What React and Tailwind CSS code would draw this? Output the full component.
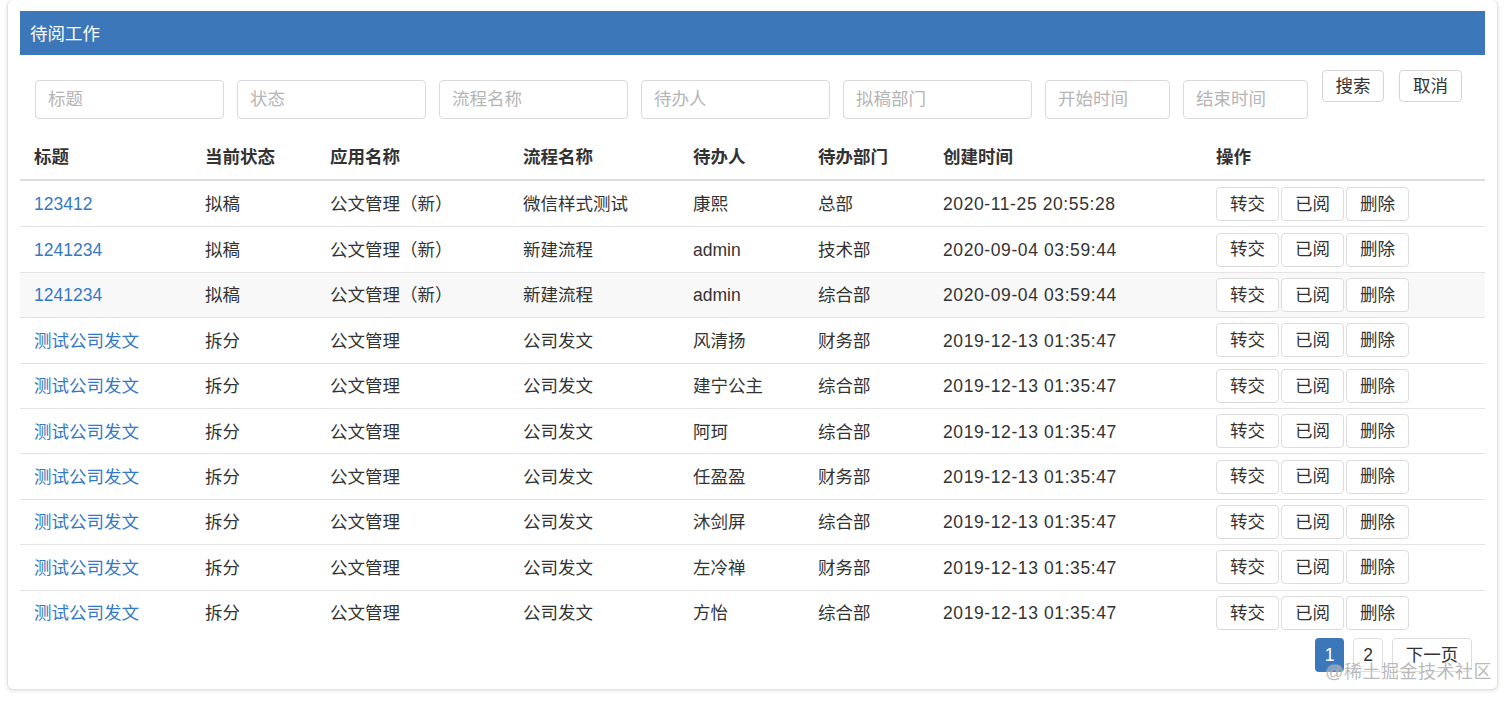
import React from 'react';

const rows = [
  { title: '123412', status: '拟稿', app: '公文管理（新）', flow: '微信样式测试', user: '康熙', dept: '总部', time: '2020-11-25 20:55:28' },
  { title: '1241234', status: '拟稿', app: '公文管理（新）', flow: '新建流程', user: 'admin', dept: '技术部', time: '2020-09-04 03:59:44' },
  { title: '1241234', status: '拟稿', app: '公文管理（新）', flow: '新建流程', user: 'admin', dept: '综合部', time: '2020-09-04 03:59:44', hover: true },
  { title: '测试公司发文', status: '拆分', app: '公文管理', flow: '公司发文', user: '风清扬', dept: '财务部', time: '2019-12-13 01:35:47' },
  { title: '测试公司发文', status: '拆分', app: '公文管理', flow: '公司发文', user: '建宁公主', dept: '综合部', time: '2019-12-13 01:35:47' },
  { title: '测试公司发文', status: '拆分', app: '公文管理', flow: '公司发文', user: '阿珂', dept: '综合部', time: '2019-12-13 01:35:47' },
  { title: '测试公司发文', status: '拆分', app: '公文管理', flow: '公司发文', user: '任盈盈', dept: '财务部', time: '2019-12-13 01:35:47' },
  { title: '测试公司发文', status: '拆分', app: '公文管理', flow: '公司发文', user: '沐剑屏', dept: '综合部', time: '2019-12-13 01:35:47' },
  { title: '测试公司发文', status: '拆分', app: '公文管理', flow: '公司发文', user: '左冷禅', dept: '财务部', time: '2019-12-13 01:35:47' },
  { title: '测试公司发文', status: '拆分', app: '公文管理', flow: '公司发文', user: '方怡', dept: '综合部', time: '2019-12-13 01:35:47' },
];

const filters = [
  { label: '标题', w: 'w-[189px]' },
  { label: '状态', w: 'w-[189px]' },
  { label: '流程名称', w: 'w-[189px]' },
  { label: '待办人', w: 'w-[189px]' },
  { label: '拟稿部门', w: 'w-[189px]' },
  { label: '开始时间', w: 'w-[125px]' },
  { label: '结束时间', w: 'w-[125px]' },
];

const cols = 'grid grid-cols-[171px_125px_193px_170px_125px_125px_273px_1fr]';

const ActionButton = ({ children }) => (
  <button className="h-[34px] w-[63px] rounded border border-[#dcdcdc] bg-white text-[17.5px] text-[#333]">
    {children}
  </button>
);

export default function App() {
  return (
    <div className="min-h-screen bg-white font-['Liberation_Sans','Noto_Sans_CJK_SC',sans-serif] text-[17.5px] text-[#333]">
      <div className="relative ml-[7px] mr-[14px] rounded-md border border-t-0 border-[#e2e2e2] px-[12px] pt-[11px] pb-[17px] shadow-[0_1px_4px_rgba(0,0,0,0.12)]">
        <div className="flex h-[44px] items-center bg-[#3c77b9] pl-[10px] pt-[2px] text-[17.5px] text-white">待阅工作</div>

        <div className="flex items-start pl-[15px] pt-[15px]">
          {filters.map((f, i) => (
            <input
              key={f.label}
              placeholder={f.label}
              className={`${f.w} mt-[10px] h-[39px] rounded border border-[#d9d9d9] px-[12px] text-[17.5px] outline-none placeholder:text-[#b5b5b5] ${i < filters.length - 1 ? 'mr-[13px]' : 'mr-[14px]'}`}
            />
          ))}
          <button className="h-[32px] w-[62px] rounded border border-[#d4d4d4] bg-white text-[17.5px] text-[#333]">搜索</button>
          <button className="ml-[15px] h-[32px] w-[63px] rounded border border-[#d4d4d4] bg-white text-[17.5px] text-[#333]">取消</button>
        </div>

        <div className="mt-[17px]">
          <div className={`${cols} h-[45px] items-center border-b-2 border-[#dddddd] font-bold`}>
            {['标题', '当前状态', '应用名称', '流程名称', '待办人', '待办部门', '创建时间', '操作'].map((h) => (
              <div key={h} className="pl-[14px]">{h}</div>
            ))}
          </div>
          {rows.map((r, i) => (
            <div
              key={i}
              className={`${cols} h-[45.4px] items-center ${i > 0 ? 'border-t border-[#e3e3e3]' : ''} ${r.hover ? 'bg-[#f8f8f8]' : ''}`}
            >
              <div className="pl-[14px] pt-[1px] text-[#3479c5]">{r.title}</div>
              <div className="pl-[14px] pt-[1px]">{r.status}</div>
              <div className="pl-[14px] pt-[1px]">{r.app}</div>
              <div className="pl-[14px] pt-[1px]">{r.flow}</div>
              <div className="pl-[14px] pt-[1px]">{r.user}</div>
              <div className="pl-[14px] pt-[1px]">{r.dept}</div>
              <div className="pl-[14px] pt-[1px] tracking-[0.6px]">{r.time}</div>
              <div className="flex gap-[2px] pl-[14px]">
                <ActionButton>转交</ActionButton>
                <ActionButton>已阅</ActionButton>
                <ActionButton>删除</ActionButton>
              </div>
            </div>
          ))}
        </div>

        <div className="mt-[3px] flex justify-end gap-[9px] pr-[13px]">
          <button className="h-[34px] w-[29px] rounded bg-[#3c77b9] text-[17.5px] text-white">1</button>
          <button className="h-[34px] w-[30px] rounded border border-[#dcdcdc] bg-white text-[17.5px] text-[#333]">2</button>
          <button className="h-[34px] w-[80px] rounded border border-[#dcdcdc] bg-white text-[17.5px] text-[#333]">下一页</button>
        </div>

        <div className="pointer-events-none absolute bottom-[3px] right-[5px] text-[18px] tracking-[0.5px] text-[#9a9a9a]/70 [text-shadow:0_0_2px_rgba(255,255,255,0.9)]">
          @稀土掘金技术社区
        </div>
      </div>
    </div>
  );
}
